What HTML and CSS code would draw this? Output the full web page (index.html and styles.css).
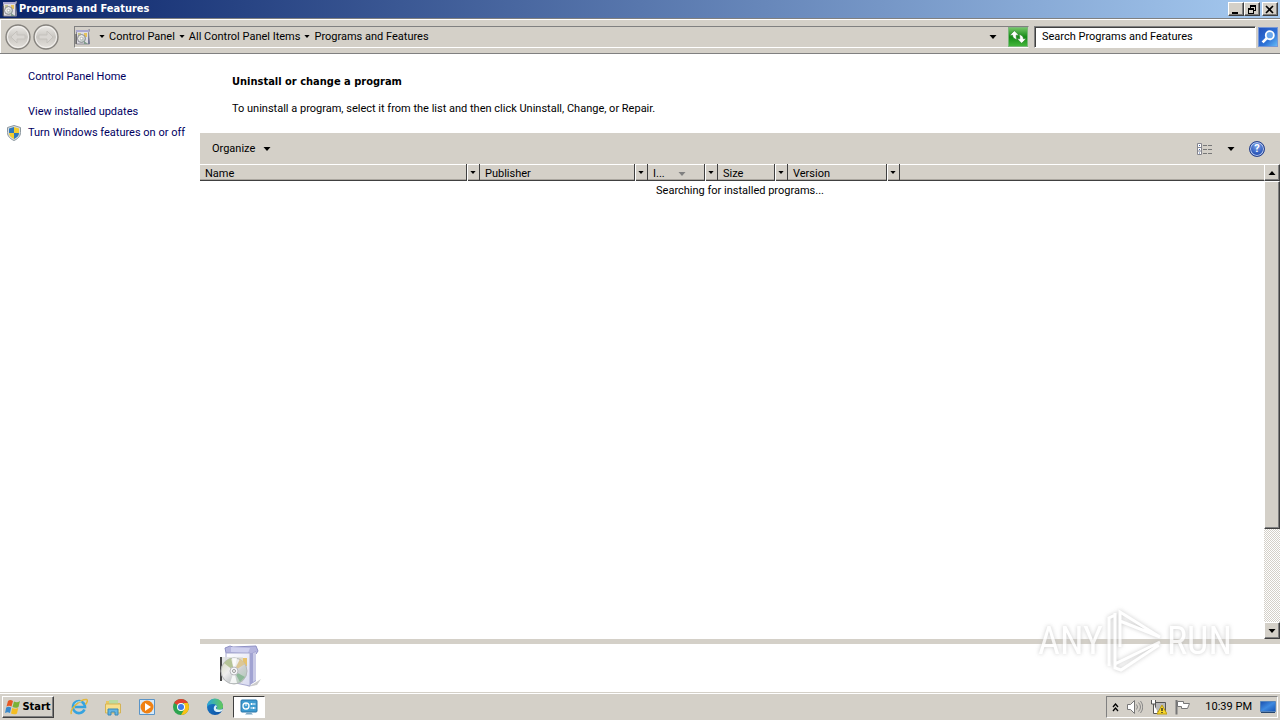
FILE: index.html
```html
<!DOCTYPE html>
<html lang="en">
<head>
    <meta charset="UTF-8">
    <meta name="viewport" content="width=device-width, initial-scale=1.0">
    <title>Programs and Features</title>
    <link rel="stylesheet" href="styles.css">
</head>
<body>
    <!-- shared icons -->
    <svg class="defs" aria-hidden="true">
        <linearGradient id="gBox" x1="0" y1="0" x2="1" y2="1">
            <stop offset="0" stop-color="#ffffff"/><stop offset="1" stop-color="#d8daf0"/>
        </linearGradient>
        <linearGradient id="gDisc" x1="0" y1="0" x2="1" y2="1">
            <stop offset="0" stop-color="#d5d9b8"/><stop offset=".4" stop-color="#eeeeee"/>
            <stop offset=".6" stop-color="#cdd0d2"/><stop offset="1" stop-color="#a9c9b0"/>
        </linearGradient>
        <linearGradient id="gRound" x1="0" y1="0" x2="0" y2="1">
            <stop offset="0" stop-color="#eeece9"/><stop offset=".5" stop-color="#c9c6c1"/><stop offset="1" stop-color="#e6e3df"/>
        </linearGradient>
        <linearGradient id="gEdge" x1="0" y1="0" x2="1" y2="1">
            <stop offset="0" stop-color="#1b7fc9"/><stop offset="1" stop-color="#0c4fa3"/>
        </linearGradient>
        <linearGradient id="gEdge2" x1="0" y1="0" x2="1" y2="0">
            <stop offset="0" stop-color="#2aa5dc"/><stop offset="1" stop-color="#62c958"/>
        </linearGradient>
        <linearGradient id="gScreen" x1="0" y1="0" x2="1" y2="1">
            <stop offset="0" stop-color="#1b4fae"/><stop offset=".5" stop-color="#3f8ae0"/><stop offset="1" stop-color="#1552b4"/>
        </linearGradient>
        <symbol id="down" viewBox="0 0 7 4"><path d="M0 0h7L3.500 4z"/></symbol>
        <symbol id="up" viewBox="0 0 7 4"><path d="M0 4h7L3.500 0z"/></symbol>
        <symbol id="programs" viewBox="0 0 16 16">
            <path d="M1.500 1.500h11l2-1v1l-1 2 1 11.500H1.500z" fill="#dfdde3" stroke="#8e8c96"/>
            <path d="M1 1h13v2H1z" fill="#a9a7cf"/>
            <path d="M13 3l2 12h-2z" fill="#777a95"/>
            <path d="M3 4h3v2H3z" fill="#c9c78a"/>
            <path d="M9 4h3v4H9z" fill="#e6c35c"/>
            <circle cx="6.500" cy="9.500" r="4" fill="url(#gDisc)" stroke="#8b8b93"/>
            <circle cx="6.500" cy="9.500" r="1.300" fill="#fff" stroke="#999" stroke-width=".6"/>
            <path d="M9 12l4 3H9z" fill="#7f9b8a"/>
            <path d="M1 5v10" stroke="#444"/>
        </symbol>
    </svg>

    <div class="window">
        <header class="titlebar">
            <svg class="icon16"><use href="#programs"/></svg>
            <h1>Programs and Features</h1>
            <div class="winbtns">
                <button class="raised" aria-label="Minimize"><svg width="10" height="9"><path d="M1 7h6v2H1z"/></svg></button>
                <button class="raised" aria-label="Restore"><svg width="10" height="9"><path d="M3 0h6v6H7V5h1V2H4v1H3zM1 3h6v6H1zM2 5v3h4V5z" fill-rule="evenodd"/></svg></button>
                <button class="raised close" aria-label="Close"><svg width="10" height="9"><path d="M1 1l7 7M8 1L1 8" stroke="#000" stroke-width="1.600"/></svg></button>
            </div>
        </header>

        <nav class="navbar">
            <div class="history">
                <button aria-label="Back">
                    <svg viewBox="0 0 28 28"><circle cx="14" cy="14" r="12" fill="url(#gRound)" stroke="#85827d" stroke-width="1.300"/><circle cx="14" cy="14" r="10.500" fill="none" stroke="#f5f3f0"/><path d="M7 14l6-6v4h8v4h-8v4z" fill="#d9d6d2" stroke="#c5c2bd"/></svg>
                </button>
                <button aria-label="Forward">
                    <svg viewBox="0 0 28 28"><circle cx="14" cy="14" r="12" fill="url(#gRound)" stroke="#85827d" stroke-width="1.300"/><circle cx="14" cy="14" r="10.500" fill="none" stroke="#f5f3f0"/><path d="M21 14l-6-6v4H7v4h8v4z" fill="#d9d6d2" stroke="#c5c2bd"/></svg>
                </button>
            </div>
            <div class="address">
                <svg class="icon16"><use href="#programs"/></svg>
                <ol class="crumbs">
                    <li><svg class="crumbarrow"><use href="#down"/></svg><a href="#">Control Panel</a></li>
                    <li><svg class="crumbarrow"><use href="#down"/></svg><a href="#">All Control Panel Items</a></li>
                    <li><svg class="crumbarrow"><use href="#down"/></svg><a href="#">Programs and Features</a></li>
                </ol>
                <button class="plain" aria-label="Previous locations"><svg class="arrow"><use href="#down"/></svg></button>
                <button class="refresh" aria-label="Refresh">
                    <svg viewBox="0 0 20 20"><path d="M1 8l5-5 5 5H8c0 2 0 3 1 5-3-1-5-2-5-5zM19 12l-5 5-5-5h3c0-2 0-3-1-5 3 1 5 2 5 5z" fill="#fff" stroke="#237823" stroke-width=".6"/></svg>
                </button>
            </div>
            <form class="search">
                <input type="text" aria-label="Search Programs and Features" placeholder="Search Programs and Features">
                <button type="button" aria-label="Search">
                    <svg viewBox="0 0 20 20"><circle cx="12" cy="8" r="4.500" fill="#6aa7ed" stroke="#fff" stroke-width="2"/><path d="M9 11l-5 5" stroke="#fff" stroke-width="3"/></svg>
                </button>
            </form>
        </nav>

        <div class="body">
            <aside class="sidebar">
                <a class="home" href="#">Control Panel Home</a>
                <a href="#">View installed updates</a>
                <a href="#">
                    <svg class="shield" viewBox="0 0 16 16"><path d="M8 .5l6.500 2v5c0 4-3 6.500-6.500 8-3.500-1.500-6.500-4-6.500-8v-5z" fill="#d7dde1" stroke="#8d989f"/><path d="M8 2L3 3.500V8h5z" fill="#2f78ba"/><path d="M8 2l5 1.500V8H8z" fill="#f3cd2f"/><path d="M3 8h5v6C5 12.500 3 11 3 8z" fill="#f3cd2f"/><path d="M13 8H8v6c3-1.500 5-3 5-6z" fill="#2f78ba"/></svg>
                    Turn Windows features on or off
                </a>
            </aside>

            <main class="content">
                <section class="intro">
                    <h2>Uninstall or change a program</h2>
                    <p>To uninstall a program, select it from the list and then click Uninstall, Change, or Repair.</p>
                </section>

                <div class="toolbar">
                    <button class="plain organize">Organize <svg class="arrow"><use href="#down"/></svg></button>
                    <div class="tools">
                        <button class="plain" aria-label="Change your view">
                            <svg width="16" height="12" viewBox="0 0 16 12"><path d="M.5.500h4v11h-4zM.5 4.500h4M.5 8h4" fill="#fff" stroke="#85858d"/><path d="M2 2.500h1M2 6.500h1M2 10h1" stroke="#4769a8"/><path d="M6 2.500h4M11 2.500h4M6 6.500h4M11 6.500h4M6 10.500h4M11 10.500h4" stroke="#777"/></svg>
                        </button>
                        <button class="plain" aria-label="More options"><svg class="arrow"><use href="#down"/></svg></button>
                        <button class="plain help" aria-label="Help">?</button>
                    </div>
                </div>

                <div class="list">
                    <div class="tablewrap">
                        <table>
                            <colgroup><col class="c-name"><col class="c-publisher"><col class="c-date"><col class="c-size"><col class="c-version"><col></colgroup>
                            <thead>
                                <tr>
                                    <th><div class="th"><span>Name</span><button aria-label="Filter by name"><svg><use href="#down"/></svg></button></div></th>
                                    <th><div class="th"><span>Publisher</span><button aria-label="Filter by publisher"><svg><use href="#down"/></svg></button></div></th>
                                    <th><div class="th"><span>I...<svg class="sort"><use href="#down"/></svg></span><button aria-label="Filter by date"><svg><use href="#down"/></svg></button></div></th>
                                    <th><div class="th"><span>Size</span><button aria-label="Filter by size"><svg><use href="#down"/></svg></button></div></th>
                                    <th><div class="th"><span>Version</span><button aria-label="Filter by version"><svg><use href="#down"/></svg></button></div></th>
                                    <th></th>
                                </tr>
                            </thead>
                        </table>
                        <p class="status">Searching for installed programs...</p>
                    </div>
                    <div class="scrollbar">
                        <button class="raised" aria-label="Scroll up"><svg class="arrow"><use href="#up"/></svg></button>
                        <div class="track"><div class="thumb raised"></div></div>
                        <button class="raised" aria-label="Scroll down"><svg class="arrow"><use href="#down"/></svg></button>
                    </div>
                </div>

                <footer class="details">
                    <svg width="44" height="44" viewBox="0 0 44 44">
                        <path d="M34 40l8-5-4 6-10 2z" fill="#ccc"/>
                        <path d="M6 4l5-2 3 1 23-1 2 5-2 3-30-1z" fill="#b5b5de" stroke="#8f91c4"/>
                        <path d="M12 3l19 1-2 5-17-1z" fill="#cfd0ee"/>
                        <path d="M7 9h24v33L7 37z" fill="url(#gBox)" stroke="#a7a9cf"/>
                        <path d="M31 10l6-3v30l-6 4z" fill="#a1a3d2"/>
                        <path d="M34 9l3-1v28l-3 2z" fill="#c9cae6"/>
                        <path d="M20 14h8v8h-5z" fill="#e7c26c"/>
                        <path d="M1 13h2v24H1z" fill="#454545"/>
                        <path d="M3 13h21v26L3 36z" fill="#dcdedd" opacity=".8"/>
                        <circle cx="15" cy="27" r="13" fill="url(#gDisc)" stroke="#b5b7b9"/>
                        <path d="M15 27L5 19a13 13 0 0 1 7-5z" fill="#b5c496"/>
                        <path d="M15 27l11-7a13 13 0 0 0-5-5z" fill="#dcc795"/>
                        <path d="M15 27l-4 12h7zM15 27L13 14h5z" fill="#fff" opacity=".8"/>
                        <path d="M15 27l11 6-5 5z" fill="#8db898"/>
                        <circle cx="15" cy="27" r="4" fill="#f4f5f7" stroke="#b9b9be"/>
                        <circle cx="15" cy="27" r="1.500" fill="#fff" stroke="#999"/>
                    </svg>
                </footer>
            </main>
        </div>
    </div>

    <footer class="taskbar">
        <button class="start raised">
            <svg width="16" height="16" viewBox="0 0 16 16"><path d="M3 2c2-1.500 3-1 5 0L6.500 7.500c-2-1-3-1-5 0z" fill="#e75822"/><path d="M9 2.500c2 1 4 1 6-.5L13.500 8c-2 1.200-4 1-6 0z" fill="#7bb236"/><path d="M1.200 8.500c2-1.200 3-1 5 0L5 14c-2-1-3-1-5 0z" fill="#3989cc"/><path d="M7.200 9c2 1 4 1 6 0L12 14.500c-2 1.200-4 1-6 0z" fill="#f4bd21"/></svg>
            Start
        </button>
        <div class="apps">
            <button aria-label="Internet Explorer">
                <svg viewBox="0 0 18 18"><path d="M14.500 11.500A6 6 0 1 1 15 9H5" fill="none" stroke="#36a3df" stroke-width="2.600"/><path d="M1.500 16C-1 12 10 1 16.500 1.500c2 .5 0 4-1 5" fill="none" stroke="#e3b83b" stroke-width="1.500"/><path d="M4.500 6.500C6 4 9 3 11.500 4" fill="none" stroke="#a3dcf5"/></svg>
            </button>
            <button aria-label="File Explorer">
                <svg viewBox="0 0 18 18"><path d="M2 3h6l1 2h7v9H2z" fill="#e8c760"/><path d="M5 2h9v5H5z" fill="#b9dba1"/><path d="M1.500 6h15v9h-15z" fill="#f7df8c" stroke="#d4b355"/><path d="M4 17v-6h10v6h-3v-3H7v3z" fill="#64b5e3" stroke="#3a88b6"/></svg>
            </button>
            <button aria-label="Media Player">
                <svg viewBox="0 0 18 18"><path d="M1.500 1.500h15v15h-15z" fill="#d5e9fa" stroke="#5a94c7"/><circle cx="9" cy="9" r="6.500" fill="#f08113"/><path d="M7 5l6 4-6 4z" fill="#fff"/></svg>
            </button>
            <button aria-label="Google Chrome">
                <svg viewBox="0 0 18 18"><circle cx="9" cy="9" r="8" fill="#2da44f"/><path d="M9 9L2.100 5A8 8 0 0 1 15.900 5H9z" fill="#e04130"/><path d="M15.900 5A8 8 0 0 1 9 17l3.500-6L12 5z" fill="#fbc116"/><circle cx="9" cy="9" r="4" fill="#fff"/><circle cx="9" cy="9" r="3" fill="#3d7be8"/></svg>
            </button>
            <button aria-label="Microsoft Edge">
                <svg viewBox="0 0 18 18"><circle cx="9" cy="9" r="8" fill="url(#gEdge)"/><path d="M1 9a8 8 0 0 1 16-1c.3 3-2 4-5 4-2 0-2-1-1-2 1-3-2-4-4-4-3 0-5 1-6 3z" fill="url(#gEdge2)"/><path d="M8 9c-1 3 1 5 4 5 2 0 3-.5 4-1l1-2c-3 1-7 1-7-1 0-1 1-1 1-2-1-1-2-1-3 1z" fill="#d8f0fa"/></svg>
            </button>
            <button class="active" aria-label="Programs and Features">
                <svg viewBox="0 0 18 18"><rect x="1" y="2" width="16" height="12" rx="1" fill="#3e9bd0" stroke="#2875a9"/><circle cx="6" cy="8" r="3" fill="none" stroke="#fff" stroke-width="1.300"/><path d="M6 8V5M10.500 6h5M10.500 10h5M11.500 5v2M13.500 9v2" stroke="#fff"/><path d="M5 16.500h8l-2-2H7z" fill="#77a5c3"/></svg>
            </button>
        </div>
        <div class="tray">
            <button aria-label="Show hidden icons"><svg width="7" height="9" viewBox="0 0 7 9"><path d="M1 4l2.500-3L6 4M1 8l2.500-3L6 8" fill="none" stroke="#000" stroke-width="1.300"/></svg></button>
            <button aria-label="Volume"><svg class="icon16" viewBox="0 0 16 16"><path d="M.5 5.500h3l4-4v13l-4-4h-3z" fill="#fff" stroke="#777"/><path d="M9.500 5.500q2 2.500 0 5M11.500 3.500q4 4.500 0 9M13.500 2q4.500 6 0 12" fill="none" stroke="#888"/></svg></button>
            <button aria-label="Network"><svg class="icon16" viewBox="0 0 16 16"><path d="M4.500 3.500h10v9h-10z" fill="#b9b9b9" stroke="#555"/><path d="M.5 1v4h4V1M2.500 5v9.500h5" fill="#fff" stroke="#555"/><path d="M11 6l5 9H6z" fill="#f7d72b" stroke="#bd9b0d"/><path d="M11 9v3M11 13v1" stroke="#222" stroke-width="1.300"/></svg></button>
            <button aria-label="Action Center"><svg class="icon16" viewBox="0 0 16 16"><path d="M1.500 1v14.500" stroke="#777" stroke-width="2"/><path d="M2.500 2.500h6v2h6l-2 5h-6v-2h-4z" fill="#fff" stroke="#777"/></svg></button>
            <time>10:39 PM</time>
            <button aria-label="Show desktop"><svg class="icon16" viewBox="0 0 16 16"><path d="M.5 2.500h15v10H.5z" fill="url(#gScreen)" stroke="#5684bb"/><path d="M1 13.500h14" stroke="#25466f"/></svg></button>
        </div>
    </footer>

    <div class="watermark">
        <span>ANY</span>
        <svg width="60" height="64" viewBox="0 0 60 64"><path d="M4 57V9l6-3M10 4v51M15 38V3l40 25L15 12M55 33L10 55v4l6 2 38-25" fill="none" stroke="#fff" stroke-width="3"/></svg>
        <span>RUN</span>
    </div>
</body>
</html>
```
FILE: styles.css
```css
* {
    margin: 0;
    padding: 0;
    box-sizing: border-box;
    list-style: none;
}

body {
    display: flex;
    flex-direction: column;
    height: 100vh;
    overflow: hidden;
    background-color: #fff;
    color: #000;
    font-family: Roboto, "DejaVu Sans Condensed", sans-serif;
    font-size: 11px;
    line-height: 14px;
}

h1,
h2,
.taskbar .start {
    font-family: "DejaVu Sans Condensed", "DejaVu Sans", sans-serif;
    font-size: 11px;
    font-weight: bold;
}

button,
input {
    border: none;
    background: none;
    color: inherit;
    font: inherit;
}

button {
    display: flex;
    align-items: center;
    justify-content: center;
}

a {
    color: inherit;
    text-decoration: none;
}

svg {
    flex: none;
    display: block;
}

.defs {
    position: absolute;
    width: 0;
    height: 0;
}

.icon16 {
    width: 16px;
    height: 16px;
}

.arrow {
    width: 8px;
    height: 4px;
}

.raised {
    background-color: #d4d0c8;
    border: 1px solid;
    border-color: #fff #404040 #404040 #fff;
    box-shadow: inset -1px -1px 0 #808080;
}

.window {
    flex: 1;
    min-height: 0;
    display: flex;
    flex-direction: column;
}

/* title bar */
.titlebar {
    display: flex;
    align-items: center;
    gap: 1px;
    height: 18px;
    padding: 0 2px;
    background: linear-gradient(to right, #0a246a, #a6caf0);
    color: #fff;
}

.titlebar h1 {
    flex: 1;
}

.winbtns {
    display: flex;
}

.winbtns button {
    width: 16px;
    height: 14px;
}

.winbtns .close {
    margin-left: 2px;
}

/* navigation bar */
.navbar {
    display: flex;
    align-items: center;
    height: 36px;
    padding: 1px 2px 0 4px;
    background-color: #d4d0c8;
    border-top: 1px solid #808080;
    border-bottom: 1px solid #808080;
    box-shadow: inset 1px 1px 0 #fff;
}

.history {
    display: flex;
    width: 70px;
}

.history button,
.history svg {
    width: 28px;
    height: 28px;
}

.address {
    flex: 1;
    display: flex;
    align-items: center;
    height: 22px;
    border: 1px solid;
    border-color: #808080 #d4d0c8 #fff #808080;
}

.crumbs {
    flex: 1;
    display: flex;
    gap: 4px;
    padding-left: 8px;
}

.crumbs li {
    display: flex;
    align-items: center;
    gap: 4px;
}

.crumbarrow {
    width: 6px;
    height: 3px;
}

.address .plain {
    width: 30px;
}

.refresh,
.search button {
    width: 20px;
    height: 20px;
    border: 1px solid #7cb77c;
    background: linear-gradient(#72c465, #148b16 50%, #42b63b);
}

.refresh svg,
.search svg {
    width: 18px;
    height: 18px;
}

.search {
    display: flex;
    align-items: center;
    gap: 2px;
    width: 249px;
    padding-left: 5px;
}

.search input {
    flex: 1;
    min-width: 0;
    height: 22px;
    padding: 0 7px;
    border: 1px solid;
    border-color: #808080 #fff #fff #808080;
    box-shadow: inset 1px 1px 0 #404040;
    background-color: #fff;
}

.search input::placeholder {
    color: #000;
    opacity: 1;
}

.search button {
    border-color: #7797d6;
    background: linear-gradient(135deg, #2452bc, #2e73d7 60%, #63b9f5);
}

/* body */
.body {
    flex: 1;
    min-height: 0;
    display: flex;
}

.sidebar {
    display: flex;
    flex-direction: column;
    gap: 7px;
    width: 200px;
    padding-top: 16px;
}

.sidebar a {
    display: flex;
    align-items: center;
    height: 14px;
    padding-left: 28px;
    color: #00005f;
    white-space: nowrap;
}

.sidebar a:has(.shield) {
    gap: 6px;
    padding-left: 6px;
}

.sidebar .home {
    margin-bottom: 14px;
}

.shield {
    width: 16px;
    height: 16px;
}

.content {
    flex: 1;
    min-width: 0;
    display: flex;
    flex-direction: column;
}

.intro {
    height: 79px;
    padding: 21px 32px 0;
}

.intro h2 {
    margin-bottom: 13px;
}

/* toolbar */
.toolbar {
    display: flex;
    align-items: center;
    justify-content: space-between;
    height: 31px;
    padding: 0 15px 0 12px;
    background-color: #d4d0c8;
}

.organize {
    gap: 8px;
}

.tools {
    display: flex;
    align-items: center;
    gap: 14px;
}

.help {
    width: 16px;
    height: 16px;
    border: 1px solid #24408e;
    border-radius: 50%;
    background: radial-gradient(circle at 50% 30%, #7da4ea, #2450b5 70%);
    box-shadow: inset 0 0 0 1px #b9c9ec;
    color: #fff;
    font-weight: bold;
}

/* list */
.list {
    flex: 1;
    min-height: 0;
    display: flex;
}

.tablewrap {
    flex: 1;
    min-width: 0;
}

table {
    width: 100%;
    table-layout: fixed;
    border-collapse: collapse;
}

.c-name {
    width: 280px;
}

.c-publisher {
    width: 168px;
}

.c-date,
.c-size {
    width: 70px;
}

.c-version {
    width: 112px;
}

th {
    height: 17px;
    background-color: #d4d0c8;
    box-shadow: inset 0 1px 0 #fff, inset 0 -1px 0 #404040, inset 0 -2px 0 #aaa69f;
    font-weight: normal;
    text-align: left;
}

.th {
    display: flex;
    height: 17px;
    border-right: 1px solid #404040;
}

.th span {
    flex: 1;
    display: flex;
    align-items: center;
    gap: 13px;
    padding: 2px 0 0 5px;
}

.th button {
    width: 13px;
    border-left: 1px solid #404040;
    box-shadow: inset 1px 0 0 #fff;
}

.th button svg {
    width: 6px;
    height: 3px;
}

.th .sort {
    width: 8px;
    height: 4px;
    fill: #808080;
}

.status {
    padding: 3px 0 0 16px;
    text-align: center;
}

.scrollbar {
    display: flex;
    flex-direction: column;
    width: 16px;
}

.scrollbar button {
    height: 17px;
}

.track {
    flex: 1;
    background: repeating-conic-gradient(#d4d0c8 0 25%, #fff 0 50%) 0 0 / 2px 2px;
}

.thumb {
    height: 79%;
}

.details {
    height: 53px;
    padding-left: 19px;
    border-top: 5px solid #d4d0c8;
}

/* taskbar */
.taskbar {
    display: flex;
    align-items: center;
    height: 28px;
    padding: 2px 2px 1px;
    background-color: #d4d0c8;
    border-top: 1px solid #d4d0c8;
    box-shadow: inset 0 1px 0 #fff;
}

.start {
    gap: 1px;
    width: 52px;
    height: 22px;
}

.apps {
    flex: 1;
    display: flex;
    gap: 2px;
    padding-left: 9px;
}

.apps button {
    width: 32px;
    height: 22px;
}

.apps svg {
    width: 18px;
    height: 18px;
}

.apps .active {
    background-color: #fff;
    border: 1px solid;
    border-color: #404040 #fff #fff #404040;
}

.tray {
    display: flex;
    align-items: center;
    gap: 8px;
    height: 22px;
    padding: 0 1px 0 5px;
    border: 1px solid;
    border-color: #808080 #fff #fff #808080;
}

.tray time {
    padding-left: 6px;
}

/* overlay mark above the window */
.watermark {
    position: absolute;
    right: 48px;
    bottom: 47px;
    display: flex;
    align-items: center;
    gap: 2px;
    color: #fff;
    font-family: "Roboto Condensed", Roboto, sans-serif;
    font-size: 38px;
    line-height: 64px;
    opacity: .8;
    filter: drop-shadow(0 0 2px #bbb);
    pointer-events: none;
}
```
